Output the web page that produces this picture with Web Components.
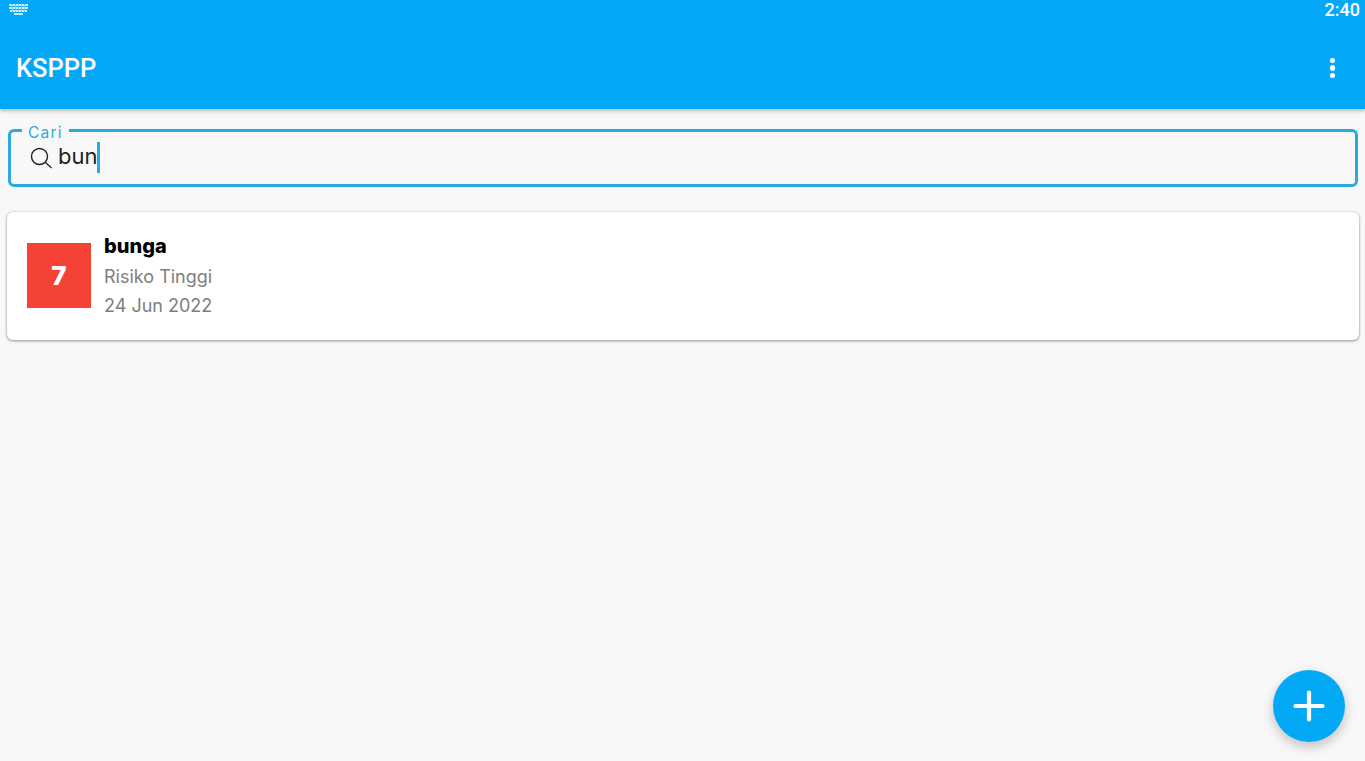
<!DOCTYPE html>
<html>
<head>
<meta charset="utf-8">
<title>KSPPP</title>
<style>
  html, body { margin: 0; height: 100%; }
  body { background: #f8f8f8; font-family: "Inter", "Liberation Sans", sans-serif; overflow: hidden; }
  ksppp-app { height: 761px; }
</style>
</head>
<body>
<ksppp-app>
  <app-bar title="KSPPP" time="2:40"></app-bar>
  <search-field label="Cari" value="bun"></search-field>
  <risk-card score="7" name="bunga" level="Risiko Tinggi" date="24 Jun 2022"></risk-card>
  <add-fab></add-fab>
</ksppp-app>
<script>
class KspppApp extends HTMLElement {
  constructor() {
    super();
    this.attachShadow({ mode: 'open' });
    this.shadowRoot.innerHTML = `
      <style>
        :host { display: flex; flex-direction: column; position: relative; }
      </style>
      <slot></slot>
    `;
  }
}

class AppBar extends HTMLElement {
  constructor() {
    super();
    this.attachShadow({ mode: 'open' });
  }

  connectedCallback() {
    this.shadowRoot.innerHTML = `
      <style>
        :host {
          display: block;
          background: #03a9f8;
          color: #fff;
          height: 109px;
          box-shadow: 0 2px 4px rgba(0,0,0,0.25);
          font-family: "Roboto", sans-serif;
        }
        .status {
          display: flex;
          justify-content: space-between;
          align-items: center;
          height: 20px;
          padding: 0 5px 2px 9px;
          box-sizing: border-box;
          font-size: 18px;
          font-weight: 500;
        }
        .toolbar {
          display: flex;
          justify-content: space-between;
          align-items: center;
          height: 89px;
          padding: 7px 30px 0 16px;
          box-sizing: border-box;
        }
        .title { font-size: 25.5px; font-weight: 500; }
        .dots { display: flex; flex-direction: column; gap: 2px; }
        .dots i { width: 5.5px; height: 5.5px; border-radius: 50%; background: #fff; display: block; }
      </style>
      <div class="status">
        <svg width="19" height="11" viewBox="0 0 19 11" fill="#cfeefe">
          <path d="M0 0h19v2H0zM0 3h19v2H0zM1 6h17v2H1zM5 9h9v2H5z"/>
          <path d="M3 0h1v8H3zM6 0h1v8H6zM9 0h1v8H9zM12 0h1v8h-1zM15 0h1v8h-1z" fill="#6fcdfa"/>
        </svg>
        <span>${this.getAttribute('time')}</span>
      </div>
      <div class="toolbar">
        <span class="title">${this.getAttribute('title')}</span>
        <span class="dots"><i></i><i></i><i></i></span>
      </div>
    `;
  }
}

class SearchField extends HTMLElement {
  constructor() {
    super();
    this.attachShadow({ mode: 'open' });
  }

  connectedCallback() {
    this.shadowRoot.innerHTML = `
      <style>
        :host {
          display: block;
          position: relative;
          margin: 20px 7px 0 8px;
          height: 58px;
          box-sizing: border-box;
          border: 3px solid #29abe2;
          border-radius: 6px;
          font-family: "Inter", sans-serif;
        }
        .label {
          position: absolute;
          left: 11px;
          top: -7px;
          padding: 0 6px;
          background: #f8f8f8;
          color: #29abe2;
          font-size: 15.5px;
          line-height: 16px;
          letter-spacing: 1.2px;
        }
        .row {
          display: flex;
          align-items: center;
          height: 100%;
          padding: 0 0 3px 18px;
          box-sizing: border-box;
        }
        svg { margin-right: 5px; margin-top: 3px; }
        .value { font-size: 22px; color: #222; line-height: 24px; margin-top: -2px; }
        .caret { width: 3px; height: 31px; background: #29abe2; margin-top: 2px; }
      </style>
      <span class="label">${this.getAttribute('label')}</span>
      <div class="row">
        <svg width="24" height="24" viewBox="0 0 24 24" fill="none" stroke="#222" stroke-width="1.4">
          <circle cx="10.5" cy="10.5" r="8"/>
          <path d="M16.5 16.5l6 5.5"/>
        </svg>
        <span class="value">${this.getAttribute('value')}</span>
        <span class="caret"></span>
      </div>
    `;
  }
}

class RiskCard extends HTMLElement {
  constructor() {
    super();
    this.attachShadow({ mode: 'open' });
  }

  connectedCallback() {
    this.shadowRoot.innerHTML = `
      <style>
        :host {
          display: flex;
          align-items: center;
          gap: 13px;
          margin: 25px 6px 0 7px;
          height: 128px;
          padding: 0 20px 2px;
          box-sizing: border-box;
          background: #fff;
          border-radius: 6px;
          box-shadow: 0 1px 3px rgba(0,0,0,0.4), 0 0 2px rgba(0,0,0,0.15);
          font-family: "Inter", sans-serif;
        }
        .score {
          width: 64px;
          height: 65px;
          background: #f44336;
          color: #fff;
          display: flex;
          align-items: center;
          justify-content: center;
          font-size: 26px;
          font-weight: 800;
        }
        .info { display: flex; flex-direction: column; margin-top: 2px; }
        .name { font-size: 20px; font-weight: 800; color: #000; line-height: 29px; padding-bottom: 2px; }
        .sub { font-size: 18px; color: #7e7e7e; line-height: 28.5px; }
      </style>
      <div class="score">${this.getAttribute('score')}</div>
      <div class="info">
        <span class="name">${this.getAttribute('name')}</span>
        <span class="sub">${this.getAttribute('level')}</span>
        <span class="sub">${this.getAttribute('date')}</span>
      </div>
    `;
  }
}

class AddFab extends HTMLElement {
  constructor() {
    super();
    this.attachShadow({ mode: 'open' });
    this.shadowRoot.innerHTML = `
      <style>
        :host {
          position: absolute;
          right: 20px;
          bottom: 19px;
          width: 72px;
          height: 72px;
          border-radius: 50%;
          background: #03a9f4;
          box-shadow: 0 5px 12px rgba(0,0,0,0.22);
          display: flex;
          align-items: center;
          justify-content: center;
        }
      </style>
      <svg width="32" height="32" viewBox="0 0 32 32" stroke="#fff" stroke-width="4.2" stroke-linecap="round">
        <path d="M16 2.5v27M2.5 16h27"/>
      </svg>
    `;
  }
}

customElements.define('ksppp-app', KspppApp);
customElements.define('app-bar', AppBar);
customElements.define('search-field', SearchField);
customElements.define('risk-card', RiskCard);
customElements.define('add-fab', AddFab);
</script>
</body>
</html>
